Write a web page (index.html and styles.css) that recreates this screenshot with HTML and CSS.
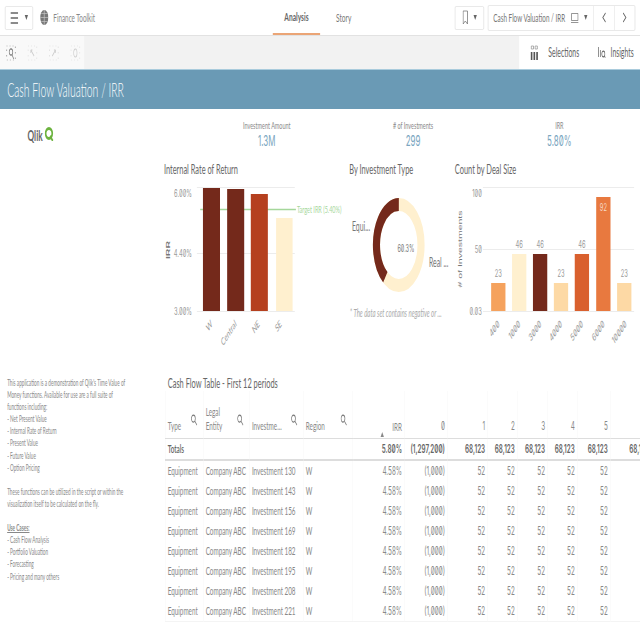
FILE: index.html
```html
<!DOCTYPE html>
<html lang="en">
<head>
    <meta charset="UTF-8">
    <title>Cash Flow Valuation / IRR</title>
    <link rel="stylesheet" href="styles.css">
</head>
<body>
<div class="app">
    <header class="topbar">
        <div class="top-left">
            <button class="menu-btn">
                <svg width="14" height="12" viewBox="0 0 14 12"><path d="M0 1h14M0 6h14M0 11h14" stroke="#666" stroke-width="1.6"/></svg>
                <span class="caret"></span>
            </button>
            <svg class="globe" width="15" height="15" viewBox="0 0 15 15"><circle cx="7.5" cy="7.5" r="7.5" fill="#777"/><path d="M0 7.5h15M7.5 0v15M2 3.5h11M2 11.5h11" stroke="#ccc" stroke-width=".8"/></svg>
            <span class="app-name">Finance Toolkit</span>
        </div>
        <nav class="tabs">
            <a class="tab active">Analysis</a>
            <a class="tab">Story</a>
        </nav>
        <div class="top-right">
            <button class="tool-btn bookmark">
                <svg width="10" height="15" viewBox="0 0 10 15"><path d="M1 1h8v13l-4-3-4 3z" fill="none" stroke="#777"/></svg>
                <span class="caret"></span>
            </button>
            <div class="sheet-nav">
                <div class="sheet-name">
                    <span>Cash Flow Valuation / IRR</span>
                    <svg width="14" height="10" viewBox="0 0 14 10"><path d="M1 .5h12v7H1zM0 9.500h14" fill="none" stroke="#777"/></svg>
                    <span class="caret"></span>
                </div>
                <div class="nav-arrow"><svg width="8" height="11" viewBox="0 0 8 11"><path d="M7 1 2 5.500l5 4.500" fill="none" stroke="#666" stroke-width="1.3"/></svg></div>
                <div class="nav-arrow"><svg width="8" height="11" viewBox="0 0 8 11"><path d="m1 1 5 4.500L1 10" fill="none" stroke="#666" stroke-width="1.3"/></svg></div>
            </div>
        </div>
    </header>

    <div class="toolbar">
        <div class="tool-icons">
            <svg width="18" height="16" viewBox="0 0 18 16"><rect x="1" y="1" width="16" height="14" fill="none" stroke="#999" stroke-dasharray="1.500 4"/><circle cx="9" cy="7" r="3.200" fill="none" stroke="#777" stroke-width="1.200"/><path d="m11 10 3 4" stroke="#777" stroke-width="1.200"/></svg>
            <svg width="18" height="16" viewBox="0 0 18 16"><rect x="1" y="1" width="16" height="14" fill="none" stroke="#ddd" stroke-dasharray="1.500 4"/><path d="m6 5 6 6M6 5h3M6 5v3" fill="none" stroke="#ccc" stroke-width="1.200"/></svg>
            <svg width="18" height="16" viewBox="0 0 18 16"><rect x="1" y="1" width="16" height="14" fill="none" stroke="#ddd" stroke-dasharray="1.500 4"/><path d="m6 11 6-6M12 5H9M12 5v3" fill="none" stroke="#ccc" stroke-width="1.200"/></svg>
            <svg width="18" height="16" viewBox="0 0 18 16"><rect x="1" y="1" width="16" height="14" fill="none" stroke="#ddd" stroke-dasharray="1.500 4"/><ellipse cx="9" cy="8" rx="3" ry="4" fill="none" stroke="#ccc" stroke-width="1.200"/></svg>
        </div>
        <div class="tool-right">
            <span class="tool-link">
                <svg width="15" height="15" viewBox="0 0 15 15"><path d="M2 1h4v3H2zM9 1h4v3H9z" fill="none" stroke="#999"/><path d="M1 7h3v8H1zM6 7h3v8H6zM11 7h3v8h-3z" fill="#555"/></svg>
                <span>Selections</span>
            </span>
            <span class="tool-link insights">
                <svg width="14" height="11" viewBox="0 0 14 11"><path d="M1 0v10M4.500 3v7" stroke="#666" stroke-width="1.300"/><circle cx="10" cy="7" r="2.800" fill="none" stroke="#666" stroke-width="1.200"/><path d="m12 9 2 2" stroke="#666" stroke-width="1.200"/></svg>
                <span>Insights</span>
            </span>
        </div>
    </div>

    <div class="title-band"><h1>Cash Flow Valuation / IRR</h1></div>

    <main class="sheet">
        <div class="logo">
            <span class="logo-text">Qlik</span>
            <svg width="17" height="14" viewBox="0 0 17 14"><ellipse cx="8" cy="6.500" rx="6" ry="5" fill="none" stroke="#6cb33f" stroke-width="3"/><path d="m10 9 5 5" stroke="#6cb33f" stroke-width="2.500"/></svg>
        </div>

        <div class="overview">
            <div class="kpis">
                <div class="kpi"><div class="kpi-label"> Investment Amount</div><div class="kpi-value num">1.3M</div></div>
                <div class="kpi"><div class="kpi-label"># of Investments</div><div class="kpi-value num">299</div></div>
                <div class="kpi"><div class="kpi-label">IRR</div><div class="kpi-value num">5.80%</div></div>
            </div>
            <div class="charts">
                <section class="chart chart-irr">
                    <h2>Internal Rate of Return</h2>
                    <svg width="340" height="170" viewBox="0 0 340 170">
                        <path d="M68 7.500H246M68 73.500H246M68 131.500H246" stroke="#e6e6e6"/>
                        <path d="M74 29.500H248" stroke="#a5d79b" stroke-width="1.500"/>
                        <rect x="79" y="8" width="31" height="123" fill="#74291b"/>
                        <rect x="123" y="9" width="31" height="122" fill="#74291b"/>
                        <rect x="166" y="14" width="31" height="117" fill="#b5401f"/>
                        <rect x="212" y="38" width="30" height="93" fill="#fff0cf"/>
                        <text class="target" x="250" y="33">Target IRR (5.40%)</text>
                        <text class="axis num" x="59" y="17" text-anchor="end">6.00%</text>
                        <text class="axis num" x="59" y="77" text-anchor="end">4.40%</text>
                        <text class="axis num" x="59" y="135" text-anchor="end">3.00%</text>
                        <text class="axis-title strong" transform="translate(19 70) rotate(-90)" text-anchor="middle">IRR</text>
                        <text class="axis" transform="translate(97 145) rotate(-40)" text-anchor="end">W</text>
                        <text class="axis" transform="translate(141 145) rotate(-40)" text-anchor="end">Central</text>
                        <text class="axis" transform="translate(183 145) rotate(-40)" text-anchor="end">NE</text>
                        <text class="axis" transform="translate(223 145) rotate(-40)" text-anchor="end">SE</text>
                    </svg>
                </section>
                <section class="chart chart-type">
                    <h2>By Investment Type</h2>
                    <svg width="190" height="170" viewBox="0 0 190 170">
                        <circle cx="95" cy="65" r="40.500" fill="none" stroke="#fff0cf" stroke-width="13"/>
                        <circle cx="95" cy="65" r="40.500" fill="none" stroke="#74291b" stroke-width="13" stroke-dasharray="101 254.500" transform="rotate(-232.900 95 65)"/>
                        <text class="donut-center num" x="108" y="72" text-anchor="middle">60.3%</text>
                        <text class="donut-label" x="10" y="51">Equi...</text>
                        <text class="donut-label" x="150" y="87">Real ...</text>
                        <text class="note" x="6" y="137">* The data set contains negative or ...</text>
                    </svg>
                </section>
                <section class="chart chart-deal">
                    <h2>Count by Deal Size</h2>
                    <svg width="344" height="170" viewBox="0 0 344 170">
                        <path d="M58 7.500H333M58 69.500H333M58 131.500H333" stroke="#e6e6e6"/>
                        <rect x="73" y="103" width="26" height="28" fill="#f5a25d"/>
                        <rect x="111" y="74" width="26" height="57" fill="#fff0cf"/>
                        <rect x="149" y="74" width="26" height="57" fill="#74291b"/>
                        <rect x="187" y="103" width="26" height="28" fill="#fdd9a5"/>
                        <rect x="225" y="74" width="26" height="57" fill="#d9602e"/>
                        <rect x="264" y="17" width="26" height="114" fill="#e8793f"/>
                        <rect x="302" y="103" width="26" height="28" fill="#fdd9a5"/>
                        <text class="axis num" x="56" y="17" text-anchor="end">100</text>
                        <text class="axis num" x="56" y="73" text-anchor="end">50</text>
                        <text class="axis num" x="56" y="135" text-anchor="end">0.03</text>
                        <text class="axis-title" transform="translate(20 69) rotate(-90)" text-anchor="middle"># of Investments</text>
                        <text class="axis num" x="86" y="97" text-anchor="middle">23</text>
                        <text class="axis num" x="124" y="68" text-anchor="middle">46</text>
                        <text class="axis num" x="162" y="68" text-anchor="middle">46</text>
                        <text class="axis num" x="200" y="97" text-anchor="middle">23</text>
                        <text class="axis num" x="238" y="68" text-anchor="middle">46</text>
                        <text class="axis num bar-inside" x="277" y="31" text-anchor="middle">92</text>
                        <text class="axis num" x="315" y="97" text-anchor="middle">23</text>
                        <text class="axis num" transform="translate(89 145) rotate(-40)" text-anchor="end">400</text>
                        <text class="axis num" transform="translate(127 145) rotate(-40)" text-anchor="end">1000</text>
                        <text class="axis num" transform="translate(165 145) rotate(-40)" text-anchor="end">3000</text>
                        <text class="axis num" transform="translate(203 145) rotate(-40)" text-anchor="end">4000</text>
                        <text class="axis num" transform="translate(241 145) rotate(-40)" text-anchor="end">5000</text>
                        <text class="axis num" transform="translate(280 145) rotate(-40)" text-anchor="end">6000</text>
                        <text class="axis num" transform="translate(320 145) rotate(-40)" text-anchor="end">10000</text>
                    </svg>
                </section>
            </div>
        </div>

        <div class="about">
            <p>This application is a demonstration of Qlik's Time Value of<br>Money functions. Available for use are a full suite of<br>functions including:<br>- Net Present Value<br>- Internal Rate of Return<br>- Present Value<br>- Future Value<br>- Option Pricing</p>
            <p>These functions can be utilized in the script or within the<br>visualization itself to be calculated on the fly.</p>
            <p><strong>Use Cases:</strong><br>- Cash Flow Analysis<br>- Portfolio Valuation<br>- Forecasting<br>- Pricing and many others</p>
        </div>

        <section class="cash-flow">
            <h2>Cash Flow Table - First 12 periods</h2>
            <table class="cf-table">
                <colgroup>
                    <col class="c-type"><col class="c-entity"><col class="c-inv"><col class="c-region"><col class="c-irr"><col class="c-zero"><col class="c-1"><col class="c-2"><col class="c-3"><col class="c-4"><col class="c-5"><col class="c-6">
                </colgroup>
                <thead id="cf-head"></thead>
                <tbody id="cf-body"></tbody>
            </table>
        </section>
    </main>
</div>
<script src="table.js"></script>
</body>
</html>
```

FILE: styles.css
```css
/* the reference is a wide page squeezed into 640px, so lay out wide and scale x */
html, body {
    margin: 0;
    padding: 0;
    overflow: hidden;
    background-color: #fff;
}
.app {
    width: 1164px;
    height: 640px;
    overflow: hidden;
    transform: scaleX(0.55);
    transform-origin: 0 0;
    font-family: Lato, "Open Sans", sans-serif;
    color: #666;
}
.num {
    font-family: Inter, sans-serif;
    font-variant-numeric: slashed-zero;
}
button {
    background: #fff;
    padding: 0;
    font: inherit;
}
.caret {
    width: 0;
    height: 0;
    border-left: 3.5px solid transparent;
    border-right: 3.5px solid transparent;
    border-top: 5px solid #666;
}

/* top bar */
.topbar {
    height: 36px;
    box-sizing: border-box;
    display: grid;
    grid-template-columns: 1fr auto 1fr;
    border-bottom: 1px solid #e2e2e2;
}
.top-left, .top-right {
    display: flex;
    align-items: center;
}
.top-left {
    padding-left: 9px;
}
.menu-btn, .bookmark {
    height: 24px;
    display: flex;
    align-items: center;
    justify-content: center;
    gap: 12px;
    border: 1px solid #e2e2e2;
    border-radius: 2px;
}
.menu-btn {
    width: 51px;
    margin-right: 13px;
}
.globe {
    margin-right: 9px;
}
.app-name {
    font-size: 11.5px;
    color: #888;
}
.tabs {
    display: flex;
}
.tab {
    width: 86px;
    height: 35px;
    box-sizing: border-box;
    display: flex;
    align-items: center;
    justify-content: center;
    font-size: 12px;
    color: #777;
}
.tab.active {
    font-weight: bold;
    color: #666;
    border-bottom: 2px solid #eba576;
}
.top-right {
    justify-content: flex-end;
    padding-right: 9px;
    gap: 7px;
}
.bookmark {
    width: 53px;
    gap: 10px;
}
.sheet-nav {
    width: 266px;
    height: 24px;
    display: flex;
    border: 1px solid #e2e2e2;
    border-radius: 2px;
}
.sheet-name {
    width: 191px;
    display: flex;
    align-items: center;
    gap: 10px;
    padding-left: 9px;
    box-sizing: border-box;
    font-size: 11.5px;
    color: #777;
    white-space: nowrap;
}
.nav-arrow {
    flex: 1;
    display: flex;
    align-items: center;
    justify-content: center;
    border-left: 1px solid #e2e2e2;
}

/* toolbar */
.toolbar {
    height: 33px;
    display: flex;
    justify-content: space-between;
    background-color: #f2f2f2;
}
.tool-icons {
    width: 153px;
    box-sizing: border-box;
    display: flex;
    align-items: center;
    gap: 21px;
    padding-left: 11px;
    background-color: #f9f9f9;
}
.tool-right {
    width: 220px;
    box-sizing: border-box;
    display: flex;
    align-items: center;
    gap: 34px;
    padding-left: 20px;
    background-color: #fff;
}
.tool-link {
    display: flex;
    align-items: center;
    gap: 18px;
    font-size: 12.5px;
    color: #666;
}
.insights {
    gap: 9px;
}

/* title */
.title-band {
    height: 40px;
    box-sizing: border-box;
    display: flex;
    align-items: center;
    padding-left: 13px;
    background-color: #6a9ab5;
    border-top: 1px solid #a9cbdc;
}
.title-band h1 {
    margin: 0;
    font-size: 19px;
    font-weight: 300;
    color: #fff;
}

/* sheet */
.sheet {
    display: grid;
    grid-template-columns: 290px 874px;
    grid-template-rows: 258px 273px;
}
.logo {
    display: flex;
    align-items: flex-start;
    gap: 3px;
    padding: 18px 0 0 50px;
}
.logo-text {
    font-size: 15px;
    line-height: 17px;
    font-weight: bold;
    color: #666;
}
.kpis {
    display: flex;
    padding: 10px 0 0 62px;
    height: 52px;
    box-sizing: border-box;
}
.kpi {
    width: 266px;
    text-align: center;
}
.kpi-label {
    font-size: 10px;
    color: #888;
}
.kpi-value {
    margin-top: 1px;
    font-size: 14.5px;
    color: #7aa6c0;
}
.charts {
    display: flex;
}
.chart h2, .cash-flow h2 {
    margin: 0;
    height: 19px;
    font-size: 13.5px;
    font-weight: normal;
    color: #666;
}
.chart svg {
    display: block;
}
.chart-irr h2 {
    padding-left: 8px;
}
.chart-type h2 {
    padding-left: 5px;
}
.chart-deal h2 {
    padding-left: 7px;
}
.axis {
    font-size: 10.5px;
    fill: #999;
}
.axis-title {
    font-family: "Liberation Sans", sans-serif;
    font-size: 10.5px;
    fill: #777;
}
.strong {
    font-weight: bold;
}
.target {
    font-size: 10px;
    fill: #a5d79b;
}
.bar-inside {
    fill: #f6d9c6;
}
.donut-center {
    font-size: 10px;
    fill: #777;
}
.donut-label {
    font-size: 12.5px;
    fill: #777;
}
.note {
    font-size: 11px;
    font-style: italic;
    fill: #aaa;
}

/* left text */
.about {
    padding: 10px 0 0 13px;
    font-family: "Liberation Sans Narrow", Lato, sans-serif;
    font-size: 8.5px;
    line-height: 12.100px;
    color: #888;
}
.about p {
    margin: 0 0 12.100px;
    white-space: nowrap;
}
.about strong {
    text-decoration: underline;
}

/* cash flow table */
.cash-flow {
    padding-top: 8px;
    overflow: hidden;
    height: 265px;
}
.cash-flow h2 {
    padding-left: 15px;
    height: 16px;
}
.cf-table {
    margin-left: 10px;
    width: 884px;
    table-layout: fixed;
    border-collapse: collapse;
    font-size: 11.500px;
    color: #888;
}
.c-type { width: 69px; }
.c-entity { width: 84px; }
.c-inv { width: 98px; }
.c-region { width: 90px; }
.c-irr { width: 94px; }
.c-zero { width: 78px; }
.c-1 { width: 73px; }
.c-2 { width: 54px; }
.c-3 { width: 55px; }
.c-4 { width: 54px; }
.c-5 { width: 60px; }
.c-6 { width: 75px; }
.cf-table th, .cf-table td {
    padding: 0 4px;
    white-space: nowrap;
    overflow: hidden;
    text-align: left;
    border-left: 1px solid #f7f7f7;
    font-weight: normal;
}
.cf-table th {
    height: 47px;
    vertical-align: bottom;
    padding-bottom: 5px;
    box-sizing: border-box;
    border-bottom: 1px solid #ddd;
    position: relative;
}
.cf-table td {
    height: 20px;
}
.cf-table tr:last-child td {
    border-bottom: 1px solid #f4f4f4;
}
.cf-table .right {
    text-align: right;
}
.head-cell {
    display: flex;
    justify-content: space-between;
    align-items: flex-end;
    padding-right: 6px;
    line-height: 14px;
}
.head-cell svg {
    margin-bottom: 7px;
}
.sort-mark {
    position: absolute;
    left: 50px;
    bottom: 1px;
    border-left: 3px solid transparent;
    border-right: 3px solid transparent;
    border-bottom: 5px solid #888;
}
.cf-table .totals td {
    height: 20px;
    font-weight: 600;
    color: #666;
    border-bottom: 2px solid #ddd;
}
```

FILE: table.js
```js
// fill the cash flow table, column 6 only shows its totals before the edge
const heads = ['Type', 'Legal<br>Entity', 'Investme...', 'Region'];
const names = [130, 143, 156, 169, 182, 195, 208, 221];
const search = '<svg width="12" height="12" viewBox="0 0 13 13"><circle cx="5" cy="5" r="3.8" fill="none" stroke="#777" stroke-width="1.3"/><path d="m8 8 4 4" stroke="#777" stroke-width="1.3"/></svg>';

let head = '<tr>';
heads.forEach(h => {
    head += `<th><div class="head-cell"><span>${h}</span>${search}</div></th>`;
});
head += '<th class="right">IRR<span class="sort-mark"></span></th>';
['0', '1', '2', '3', '4', '5'].forEach(p => {
    head += `<th class="right num">${p}</th>`;
});
document.getElementById('cf-head').innerHTML = head + '<th></th></tr>';

let body = '<tr class="totals"><td>Totals</td><td></td><td></td><td></td>';
body += '<td class="right num">5.80%</td><td class="right num">(1,297,200)</td>';
for (let i = 0; i < 6; i++) {
    body += '<td class="right num">68,123</td>';
}
body += '</tr>';
names.forEach(n => {
    body += `<tr><td>Equipment</td><td>Company ABC</td><td>Investment ${n}</td><td>W</td>`;
    body += '<td class="right num">4.58%</td><td class="right num">(1,000)</td>';
    for (let i = 0; i < 5; i++) {
        body += '<td class="right num">52</td>';
    }
    body += '<td></td></tr>';
});
document.getElementById('cf-body').innerHTML = body;
```
